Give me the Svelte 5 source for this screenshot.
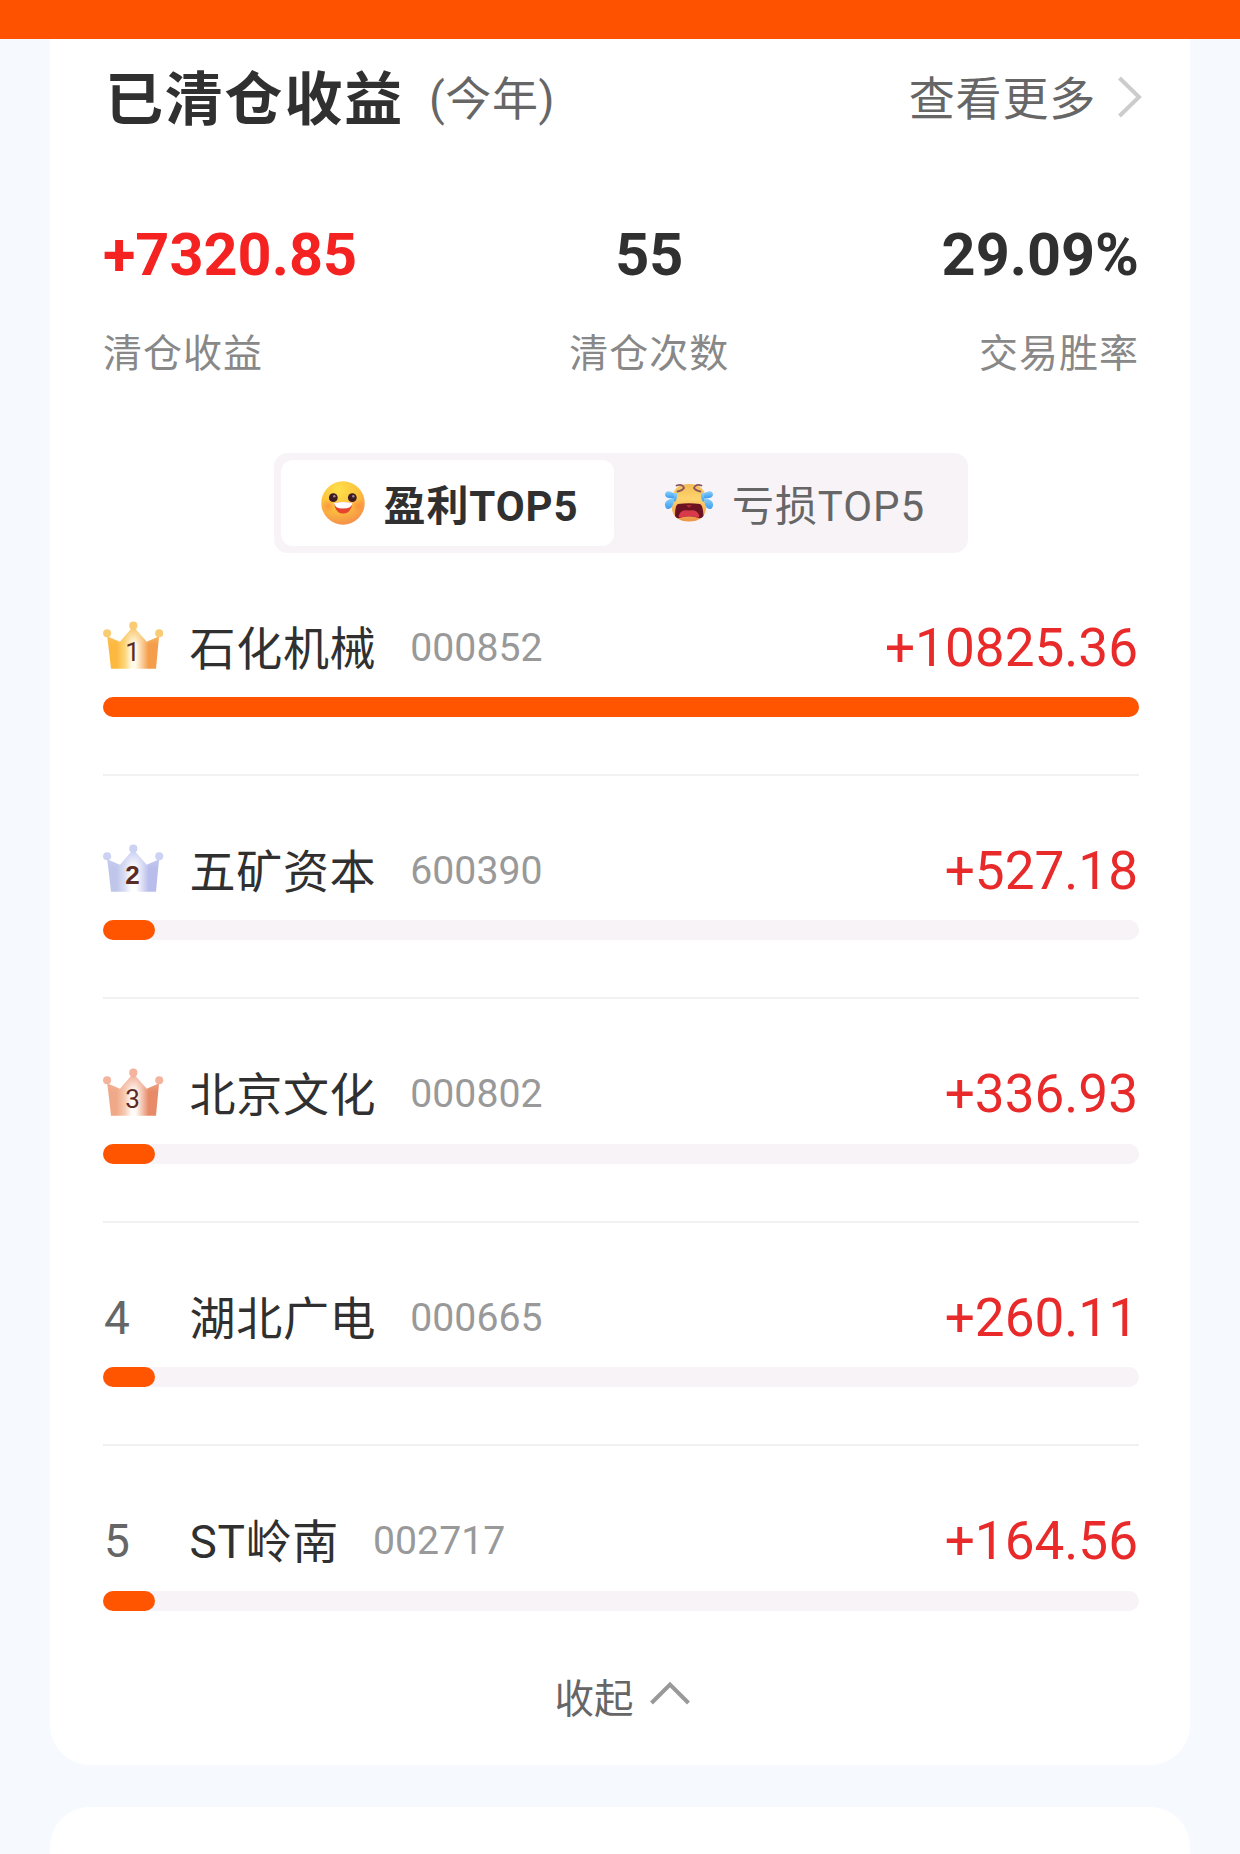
<script>
  const summary = [
    { value: "+7320.85", label: "清仓收益", tone: "up" },
    { value: "55", label: "清仓次数", tone: "" },
    { value: "29.09%", label: "交易胜率", tone: "" },
  ];

  const stocks = [
    { name: "石化机械", code: "000852", profit: "+10825.36", percent: 100 },
    { name: "五矿资本", code: "600390", profit: "+527.18", percent: 5 },
    { name: "北京文化", code: "000802", profit: "+336.93", percent: 5 },
    { name: "湖北广电", code: "000665", profit: "+260.11", percent: 5 },
    { name: "ST岭南", code: "002717", profit: "+164.56", percent: 5 },
  ];

  // gold, silver, bronze
  const crowns = [
    { left: "#fdb840", soft: "#fdd679", mid: "#fffbe8", right: "#f49d4a", ball: "#f9cb74" },
    { left: "#bfc6ea", soft: "#d9def4", mid: "#ffffff", right: "#b9bdeb", ball: "#cdd2f3" },
    { left: "#f0a988", soft: "#f6cab4", mid: "#fffcf8", right: "#e68a67", ball: "#f3b39d" },
  ];

  let tab = $state("profit");
</script>

<div class="topbar"></div>

<main>
  <section class="card">
    <header>
      <h1>已清仓收益</h1>
      <span class="period">(今年)</span>
      <a class="more" href="#more">
        <span>查看更多</span>
        <svg width="26" height="42" viewBox="0 0 26 42">
          <path d="M2.5 2 L22 21 L2.5 40" fill="none" stroke="#ccc" stroke-width="4" />
        </svg>
      </a>
    </header>

    <div class="summary">
      {#each summary as item}
        <div class="stat">
          <div class="value {item.tone}">{item.value}</div>
          <div class="label">{item.label}</div>
        </div>
      {/each}
    </div>

    <div class="tabs">
      <button class="tab" class:active={tab === "profit"} onclick={() => (tab = "profit")}>
        <svg class="happy" width="44" height="44" viewBox="0 0 44 44">
          <defs>
            <radialGradient id="face" cx="0.4" cy="0.2" r="0.85">
              <stop offset="0" stop-color="#ffe04a" />
              <stop offset="0.55" stop-color="#fcc03c" />
              <stop offset="1" stop-color="#f48a4c" />
            </radialGradient>
            <radialGradient id="cheek">
              <stop offset="0" stop-color="#ff8540" stop-opacity="0.7" />
              <stop offset="1" stop-color="#ff8540" stop-opacity="0" />
            </radialGradient>
          </defs>
          <circle cx="22" cy="22" r="21.7" fill="url(#face)" />
          <circle cx="7" cy="25" r="7" fill="url(#cheek)" />
          <circle cx="37" cy="25" r="7" fill="url(#cheek)" />
          <circle cx="12.3" cy="16.7" r="4.4" fill="#3b1a23" />
          <circle cx="31.3" cy="16.7" r="4.4" fill="#3b1a23" />
          <circle cx="13.3" cy="15.2" r="1.2" fill="#a58b91" />
          <circle cx="32.3" cy="15.2" r="1.2" fill="#a58b91" />
          <path d="M13 22 Q22 20 31.5 22 Q30 32.5 22 32.5 Q14.5 32.5 13 22Z" fill="#e4432d" />
          <path d="M13 22 Q22 20 31.5 22 Q31 27.5 22 27.5 Q13.5 27.5 13 22Z" fill="#fff" />
        </svg>
        <span>盈利TOP5</span>
      </button>
      <button class="tab" class:active={tab === "loss"} onclick={() => (tab = "loss")}>
        <svg class="crying" width="50" height="40" viewBox="0 0 50 40">
          <defs>
            <linearGradient id="sad" x1="0" y1="0" x2="0" y2="1">
              <stop offset="0" stop-color="#f3bd55" />
              <stop offset="0.4" stop-color="#fed36d" />
              <stop offset="1" stop-color="#ed9447" />
            </linearGradient>
            <linearGradient id="tear" x1="0" y1="0" x2="0" y2="1">
              <stop offset="0" stop-color="#8bd0f8" />
              <stop offset="1" stop-color="#3d9df0" />
            </linearGradient>
          </defs>
          <path d="M7.5 19 Q8 1 25 1 Q42 1 42.5 19 Q43.5 38.5 25 38.5 Q6.5 38.5 7.5 19Z" fill="url(#sad)" />
          <path
            d="M14 21 Q25 19.5 36 21 Q39 22 39.5 33 Q37 36.5 33 34.5 Q25 32 17 34.5 Q13 36.5 11 33 Q11 22 14 21Z"
            fill="#6b1320"
          />
          <path
            d="M15 32 Q17 26 25 27.5 Q33 26 35 32 Q36 35 33 34.5 Q25 32 17 34.5 Q14 35 15 32Z"
            fill="#d9394b"
          />
          <path d="M22.5 22 Q25 27 27.5 22Z" fill="#b22734" />
          <g fill="none" stroke="#8a5560" stroke-width="1.8" stroke-linecap="round">
            <path d="M12.5 2.5 Q18.5 0.5 20 5 Q18.5 7.5 13.5 8.5" />
            <path d="M37.5 2.5 Q31.5 0.5 30 5 Q31.5 7.5 36.5 8.5" />
          </g>
          <g fill="url(#tear)">
            <path d="M13 10 Q13.5 17 10.5 19 Q7 15 9 10Z" />
            <path d="M9.5 10 Q2 6 1 11.5 Q1 16 10 15Z" />
            <path d="M10 15 Q0 17 1 22.5 Q2 28 7 25 Q10 21 10 15Z" />
            <path d="M37 10 Q36.5 17 39.5 19 Q43 15 41 10Z" />
            <path d="M40.5 10 Q48 6 49 11.5 Q49 16 40 15Z" />
            <path d="M40 15 Q50 17 49 22.5 Q48 28 43 25 Q40 21 40 15Z" />
          </g>
        </svg>
        <span>亏损TOP5</span>
      </button>
    </div>

    <ul>
      {#each stocks as stock, i}
        <li>
          <div class="row">
            <div class="rank">
              {#if i < 3}
                <svg width="61" height="49" viewBox="0 0 61 49">
                  <defs>
                    <linearGradient id="crown{i}" x1="0" x2="1" y1="0" y2="0">
                      <stop offset="0.18" stop-color={crowns[i].left} />
                      <stop offset="0.34" stop-color={crowns[i].soft} />
                      <stop offset="0.47" stop-color={crowns[i].mid} />
                      <stop offset="0.55" stop-color={crowns[i].mid} />
                      <stop offset="0.8" stop-color={crowns[i].right} />
                    </linearGradient>
                    <linearGradient id="tip{i}" x1="0" x2="0" y1="0" y2="1">
                      <stop offset="0" stop-color={crowns[i].ball} />
                      <stop offset="0.4" stop-color={crowns[i].ball} stop-opacity="0" />
                    </linearGradient>
                  </defs>
                  {#each ["crown", "tip"] as layer}
                    <path
                      d="M4.3 15.5 L17 20.7 L28 8 L32.5 8 L43.7 20.7 L56 15.5 L53 47.7 L8 47.7Z"
                      fill="url(#{layer}{i})"
                    />
                  {/each}
                  <g fill={crowns[i].ball}>
                    <circle cx="4.1" cy="12.3" r="4" />
                    <circle cx="30.3" cy="4.7" r="4.1" />
                    <circle cx="56.2" cy="12.3" r="4" />
                  </g>
                  <text class:heavy={i === 1} x="29.5" y="39.7" text-anchor="middle">{i + 1}</text>
                </svg>
              {:else}
                <span>{i + 1}</span>
              {/if}
            </div>
            <span class="name">{stock.name}</span>
            <span class="code">{stock.code}</span>
            <span class="profit">{stock.profit}</span>
          </div>
          <div class="track">
            <div class="fill" style="width: {stock.percent}%"></div>
          </div>
        </li>
      {/each}
    </ul>

    <button class="collapse">
      收起
      <svg width="40" height="24" viewBox="0 0 40 24">
        <path d="M1.5 22 L20 3.5 L38.5 22" fill="none" stroke="#999" stroke-width="4" />
      </svg>
    </button>
  </section>

  <section class="card next"></section>
</main>

<style>
  :global(body) {
    margin: 0;
    background: #f6faff;
    font-family: Roboto, "Noto Sans CJK SC", sans-serif;
    color: #303030;
  }

  .topbar {
    height: 39px;
    background: #ff5200;
  }

  main {
    height: 1815px;
    padding: 0 50px;
    overflow: hidden;
  }

  .card {
    box-sizing: border-box;
    height: 1726px;
    padding: 0 51px 0 53px;
    background: #fff;
    border-radius: 0 0 40px 40px;
  }

  .card.next {
    height: 100px;
    margin-top: 42px;
    border-radius: 40px 40px 0 0;
  }

  header {
    display: flex;
    align-items: center;
    height: 116px;
    margin-bottom: 65px;
    line-height: 116px;
    white-space: nowrap;
  }

  h1 {
    margin: 6px 0 0 2px;
    font-size: 58px;
    font-weight: 700;
    letter-spacing: 1.8px;
  }

  .period {
    margin: 4px 0 0 25px;
    font-size: 46px;
    letter-spacing: 0.6px;
    color: #666;
  }

  .more {
    display: flex;
    align-items: center;
    margin-left: auto;
    font-size: 46px;
    letter-spacing: 0.8px;
    color: #666;
    text-decoration: none;
  }

  .more span {
    margin-top: 4px;
  }

  .more svg {
    margin: 0 -4px 0 21px;
  }

  .summary {
    display: flex;
    justify-content: space-between;
    height: 233px;
  }

  .stat {
    text-align: center;
  }

  .stat:first-child {
    text-align: left;
  }

  .stat:last-child {
    text-align: right;
  }

  .value {
    line-height: 70px;
    font-size: 59.4px;
    font-weight: 700;
  }

  .value.up {
    color: #f52222;
  }

  .label {
    margin-top: 36px;
    line-height: 56px;
    font-size: 39px;
    letter-spacing: 1px;
    color: #888;
  }

  .tabs {
    display: flex;
    box-sizing: border-box;
    width: 694px;
    height: 99.5px;
    margin-left: 171px;
    padding: 7px;
    border-radius: 14px;
    background: #f7f3f7;
  }

  .tab {
    display: flex;
    flex: 1;
    align-items: center;
    justify-content: center;
    padding: 0 0 0 14px;
    border: none;
    border-radius: 12px;
    background: none;
    font: inherit;
    font-size: 42px;
    letter-spacing: 0.9px;
    color: #666;
  }

  .tab.active {
    flex: 0 0 333px;
    box-sizing: border-box;
    padding-left: 4px;
    background: #fff;
    font-weight: 700;
    color: #303030;
  }

  .happy {
    margin-right: 19px;
  }

  .crying {
    margin-right: 18px;
  }

  ul {
    margin: 0;
    padding: 0;
    list-style: none;
  }

  li {
    box-sizing: border-box;
    height: 223.4px;
    padding-top: 56px;
    border-bottom: 2px solid #f1f1f1;
  }

  li:last-child {
    border-bottom: none;
  }

  .row {
    display: flex;
    align-items: center;
    height: 78px;
    margin-bottom: 10.5px;
    line-height: 76px;
    white-space: nowrap;
  }

  .rank {
    width: 86.5px;
    font-size: 46px;
    color: #666;
  }

  .rank span {
    display: block;
    padding-left: 1px;
  }

  .rank svg {
    display: block;
    margin-bottom: 4px;
  }

  .rank text {
    font-size: 26px;
    fill: #5b2c25;
  }

  .rank text.heavy {
    font-family: "Liberation Sans", sans-serif;
    font-weight: 700;
  }

  .name {
    padding-top: 2px;
    font-size: 46px;
    letter-spacing: 0.7px;
  }

  .code {
    margin-left: 34px;
    font-size: 39.2px;
    color: #999;
  }

  .profit {
    margin-left: auto;
    margin-right: 1px;
    font-size: 53.1px;
    color: #e82a2a;
  }

  .track {
    height: 20px;
    border-radius: 10px;
    background: #f7f3f7;
  }

  .fill {
    height: 100%;
    border-radius: 10px;
    background: #ff5500;
  }

  .collapse {
    display: flex;
    align-items: center;
    justify-content: center;
    width: 100%;
    height: 60px;
    margin-top: -4px;
    padding: 0 0 0 2px;
    border: none;
    background: none;
    font: inherit;
    font-size: 39.5px;
    color: #666;
  }

  .collapse svg {
    margin: 0 0 5px 16px;
  }
</style>
